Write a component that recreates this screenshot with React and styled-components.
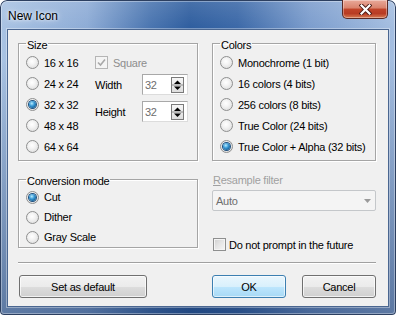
import styled, { createGlobalStyle } from 'styled-components'

const Global = createGlobalStyle`
  html, body { margin: 0; padding: 0; background: #fff; }
  body { font-family: "Liberation Sans", Arial, sans-serif; font-size: 11px; letter-spacing: -0.25px; color: #000; }
`

const Window = styled.div`
  width: 396px;
  height: 315px;
  box-sizing: border-box;
  display: flex;
  flex-direction: column;
  border-radius: 7px 7px 4px 4px;
  overflow: hidden;
  background:
    linear-gradient(180deg, rgba(255,255,255,0.12) 0, rgba(255,255,255,0) 28px, rgba(20,50,100,0) 60px, rgba(20,50,100,0.5) 100%),
    linear-gradient(90deg, #a9c3e3 0%, #8eacd6 22%, #4a75b0 38%, #2f5e9f 48%, #3c69a8 60%, #7c9dcd 78%, #a6bfe1 100%);
  box-shadow: inset 0 0 0 1px #2c3f60, inset 0 0 0 2px rgba(255,255,255,0.35);
`

const TitleBar = styled.div`
  height: 29px;
  flex: none;
  display: flex;
  align-items: flex-start;
  padding: 0 8px;
`

const Title = styled.div`
  font-size: 12px;
  line-height: 14px;
  letter-spacing: 0;
  padding-top: 9px;
  color: #000;
  text-shadow: 0 0 6px rgba(255,255,255,0.9), 0 0 3px rgba(255,255,255,0.8);
`

const CloseButton = styled.div`
  margin-left: auto;
  width: 46px;
  height: 19px;
  box-sizing: border-box;
  border: 1px solid #5a2a26;
  border-top: none;
  border-radius: 0 0 5px 5px;
  background: linear-gradient(180deg, #e9a99a 0%, #d9826c 45%, #c1442a 50%, #b83c24 75%, #d77a52 100%);
  box-shadow: inset 0 0 0 1px rgba(255,255,255,0.35);
  display: flex;
  align-items: center;
  justify-content: center;
`

const Client = styled.div`
  flex: 1;
  margin: 0 7px 8px;
  background: #f0f0f0;
  border: 1px solid #4a6690;
  box-shadow: 0 0 0 1px rgba(255,255,255,0.35);
  padding: 5px 12px 0 10px;
  display: flex;
  flex-direction: column;
`

const Columns = styled.div`
  display: grid;
  grid-template-columns: 180px 164px;
  column-gap: 14px;
  align-items: start;
`

const Column = styled.div`
  display: flex;
  flex-direction: column;
`

const GroupBox = styled.fieldset`
  margin: ${p => p.$top || 0}px 0 0;
  padding: ${p => p.$pt ?? 1}px 0 ${p => p.$pb ?? 3}px 7px;
  border: 1px solid #a5a5a5;
  box-shadow: inset 1px 1px 0 #fff, 1px 1px 0 #fff;
  min-width: 0;
`

const Legend = styled.legend`
  padding: 4px 1px 0;
  font-size: 11px;
  line-height: 12px;
`

const Row = styled.div`
  display: flex;
  align-items: flex-start;
`

const OptionList = styled.div`
  display: flex;
  flex-direction: column;
  width: ${p => p.$w ? p.$w + 'px' : 'auto'};
`

const Option = styled.div`
  display: flex;
  align-items: center;
  gap: 5px;
  height: ${p => p.$h || 21}px;
  color: ${p => p.$disabled ? '#8d8d8d' : '#000'};
  white-space: nowrap;
`

const RadioMark = styled.span`
  flex: none;
  width: 13px;
  height: 13px;
  box-sizing: border-box;
  border-radius: 50%;
  border: 1px solid #8e8f8f;
  background: radial-gradient(circle at 45% 40%, #ffffff 0%, #f4f4f4 35%, #d6d6d6 100%);
  display: flex;
  align-items: center;
  justify-content: center;
  &::after {
    content: '';
    display: ${p => p.$checked ? 'block' : 'none'};
    width: 7px;
    height: 7px;
    border-radius: 50%;
    background: radial-gradient(circle at 40% 35%, #b9ecfd 0%, #3a9ad6 40%, #0e5a92 80%, #0a3f6c 100%);
    box-shadow: 0 0 0 1px #1d4f7e;
  }
`

const CheckMark = styled.span`
  flex: none;
  width: 13px;
  height: 13px;
  box-sizing: border-box;
  border: 1px solid ${p => p.$disabled ? '#b5b5b5' : '#8e8f8f'};
  background: ${p => p.$disabled
    ? '#f4f4f4'
    : 'linear-gradient(135deg, #cfcfcf 0%, #e6e6e6 50%, #f6f6f6 100%)'};
  box-shadow: inset 0 0 0 1px #f4f4f4;
  display: flex;
  align-items: center;
  justify-content: center;
`

const FieldColumn = styled.div`
  display: flex;
  flex-direction: column;
`

const FieldRow = styled.div`
  display: flex;
  align-items: center;
  margin-top: ${p => p.$mt || 0}px;
`

const FieldLabel = styled.span`
  width: 47px;
`

const SpinBox = styled.div`
  width: 46px;
  height: 21px;
  box-sizing: border-box;
  border: 1px solid #a8a8a8;
  border-right-color: #dcdcdc;
  border-bottom-color: #dcdcdc;
  background: #fff;
  display: flex;
  align-items: center;
  justify-content: space-between;
  padding: 0 3px 0 2px;
  color: #6d6d6d;
`

const SpinButton = styled.span`
  width: 13px;
  height: 16px;
  box-sizing: border-box;
  border: 1px solid #7a7a7a;
  background: linear-gradient(180deg, #f6f6f6, #dedede);
  display: flex;
`

const FieldCaption = styled.div`
  margin-top: 13px;
  padding-left: 1px;
  line-height: 13px;
  color: #a0a0a0;
  u { text-decoration: underline; }
`

const Select = styled.div`
  margin-top: 3px;
  height: 21px;
  box-sizing: border-box;
  border: 1px solid #c4c7ca;
  border-radius: 2px;
  background: #f4f4f4;
  color: #6d6d6d;
  display: flex;
  align-items: center;
  justify-content: space-between;
  padding: 0 4px 0 3px;
`

const CheckRow = styled.div`
  margin-top: 27px;
  padding-left: 1px;
  display: flex;
  align-items: center;
  gap: 3px;
  height: 13px;
`

const Separator = styled.div`
  margin-top: 11px;
  border-top: 1px solid #a0a0a0;
  border-bottom: 1px solid #fff;
`

const ButtonRow = styled.div`
  margin-top: 11px;
  padding-left: 1px;
  display: flex;
  align-items: center;
  justify-content: space-between;
`

const ButtonGroup = styled.div`
  display: flex;
  gap: 16px;
`

const Button = styled.div`
  width: ${p => p.$w}px;
  height: 23px;
  box-sizing: border-box;
  border: 1px solid ${p => p.$default ? '#3c7fb1' : '#707070'};
  border-radius: 3px;
  background: ${p => p.$default
    ? 'linear-gradient(180deg, #eaf6fd 0%, #d9f0fc 50%, #bee6fd 50%, #a7d9f5 100%)'
    : 'linear-gradient(180deg, #f2f2f2 0%, #ebebeb 50%, #dddddd 50%, #cfcfcf 100%)'};
  box-shadow: inset 0 0 0 1px ${p => p.$default ? 'rgba(255,255,255,0.6)' : 'rgba(255,255,255,0.7)'};
  display: flex;
  align-items: center;
  justify-content: center;
`

const Radio = ({ checked, children, h }) => (
  <Option $h={h}>
    <RadioMark $checked={checked} />
    <span>{children}</span>
  </Option>
)

const CloseGlyph = () => (
  <svg width="13" height="11" viewBox="0 0 13 11">
    <path d="M2.5 1.5 L10.5 9.5 M10.5 1.5 L2.5 9.5" stroke="#4a1a14" strokeWidth="4" strokeLinecap="square" fill="none" />
    <path d="M2.5 1.5 L10.5 9.5 M10.5 1.5 L2.5 9.5" stroke="#fff" strokeWidth="2.2" strokeLinecap="square" fill="none" />
  </svg>
)

const Tick = ({ color }) => (
  <svg width="9" height="9" viewBox="0 0 9 9">
    <path d="M1 4.5 L3.5 7 L8 1.5" stroke={color} strokeWidth="1.6" fill="none" />
  </svg>
)

const SpinArrows = () => (
  <svg width="11" height="14" viewBox="0 0 11 14">
    <path d="M2 6 L5.5 2.5 L9 6 Z" fill="#000" />
    <path d="M0 7 H11" stroke="#8a8a8a" strokeWidth="1" />
    <path d="M2 8.5 L5.5 12 L9 8.5 Z" fill="#000" />
  </svg>
)

const Spin = ({ value }) => (
  <SpinBox>
    <span>{value}</span>
    <SpinButton><SpinArrows /></SpinButton>
  </SpinBox>
)

const sizes = ['16 x 16', '24 x 24', '32 x 32', '48 x 48', '64 x 64']
const colors = ['Monochrome (1 bit)', '16 colors (4 bits)', '256 colors (8 bits)', 'True Color (24 bits)', 'True Color + Alpha (32 bits)']
const modes = ['Cut', 'Dither', 'Gray Scale']

export default function App() {
  return (
    <>
      <Global />
      <Window>
        <TitleBar>
          <Title>New Icon</Title>
          <CloseButton><CloseGlyph /></CloseButton>
        </TitleBar>
        <Client>
          <Columns>
            <Column>
              <GroupBox>
                <Legend>Size</Legend>
                <Row>
                  <OptionList $w={69}>
                    {sizes.map(s => <Radio key={s} checked={s === '32 x 32'}>{s}</Radio>)}
                  </OptionList>
                  <FieldColumn>
                    <Option $disabled>
                      <CheckMark $disabled><Tick color="#a8a8a8" /></CheckMark>
                      <span>Square</span>
                    </Option>
                    <FieldRow $mt={1}>
                      <FieldLabel>Width</FieldLabel>
                      <Spin value="32" />
                    </FieldRow>
                    <FieldRow $mt={6}>
                      <FieldLabel>Height</FieldLabel>
                      <Spin value="32" />
                    </FieldRow>
                  </FieldColumn>
                </Row>
              </GroupBox>
              <GroupBox $top={10} $pt={0} $pb={0}>
                <Legend>Conversion mode</Legend>
                <OptionList>
                  {modes.map(m => <Radio key={m} h={20} checked={m === 'Cut'}>{m}</Radio>)}
                </OptionList>
              </GroupBox>
            </Column>
            <Column>
              <GroupBox>
                <Legend>Colors</Legend>
                <OptionList>
                  {colors.map(c => <Radio key={c} checked={c.includes('Alpha')}>{c}</Radio>)}
                </OptionList>
              </GroupBox>
              <FieldCaption><u>R</u>esample filter</FieldCaption>
              <Select>
                <span>Auto</span>
                <svg width="7" height="4" viewBox="0 0 7 4"><path d="M0 0 H7 L3.5 4 Z" fill="#9a9a9a" /></svg>
              </Select>
              <CheckRow>
                <CheckMark />
                <span>Do not prompt in the future</span>
              </CheckRow>
            </Column>
          </Columns>
          <Separator />
          <ButtonRow>
            <Button $w={128}>Set as default</Button>
            <ButtonGroup>
              <Button $w={74} $default>OK</Button>
              <Button $w={74}>Cancel</Button>
            </ButtonGroup>
          </ButtonRow>
        </Client>
      </Window>
    </>
  )
}
